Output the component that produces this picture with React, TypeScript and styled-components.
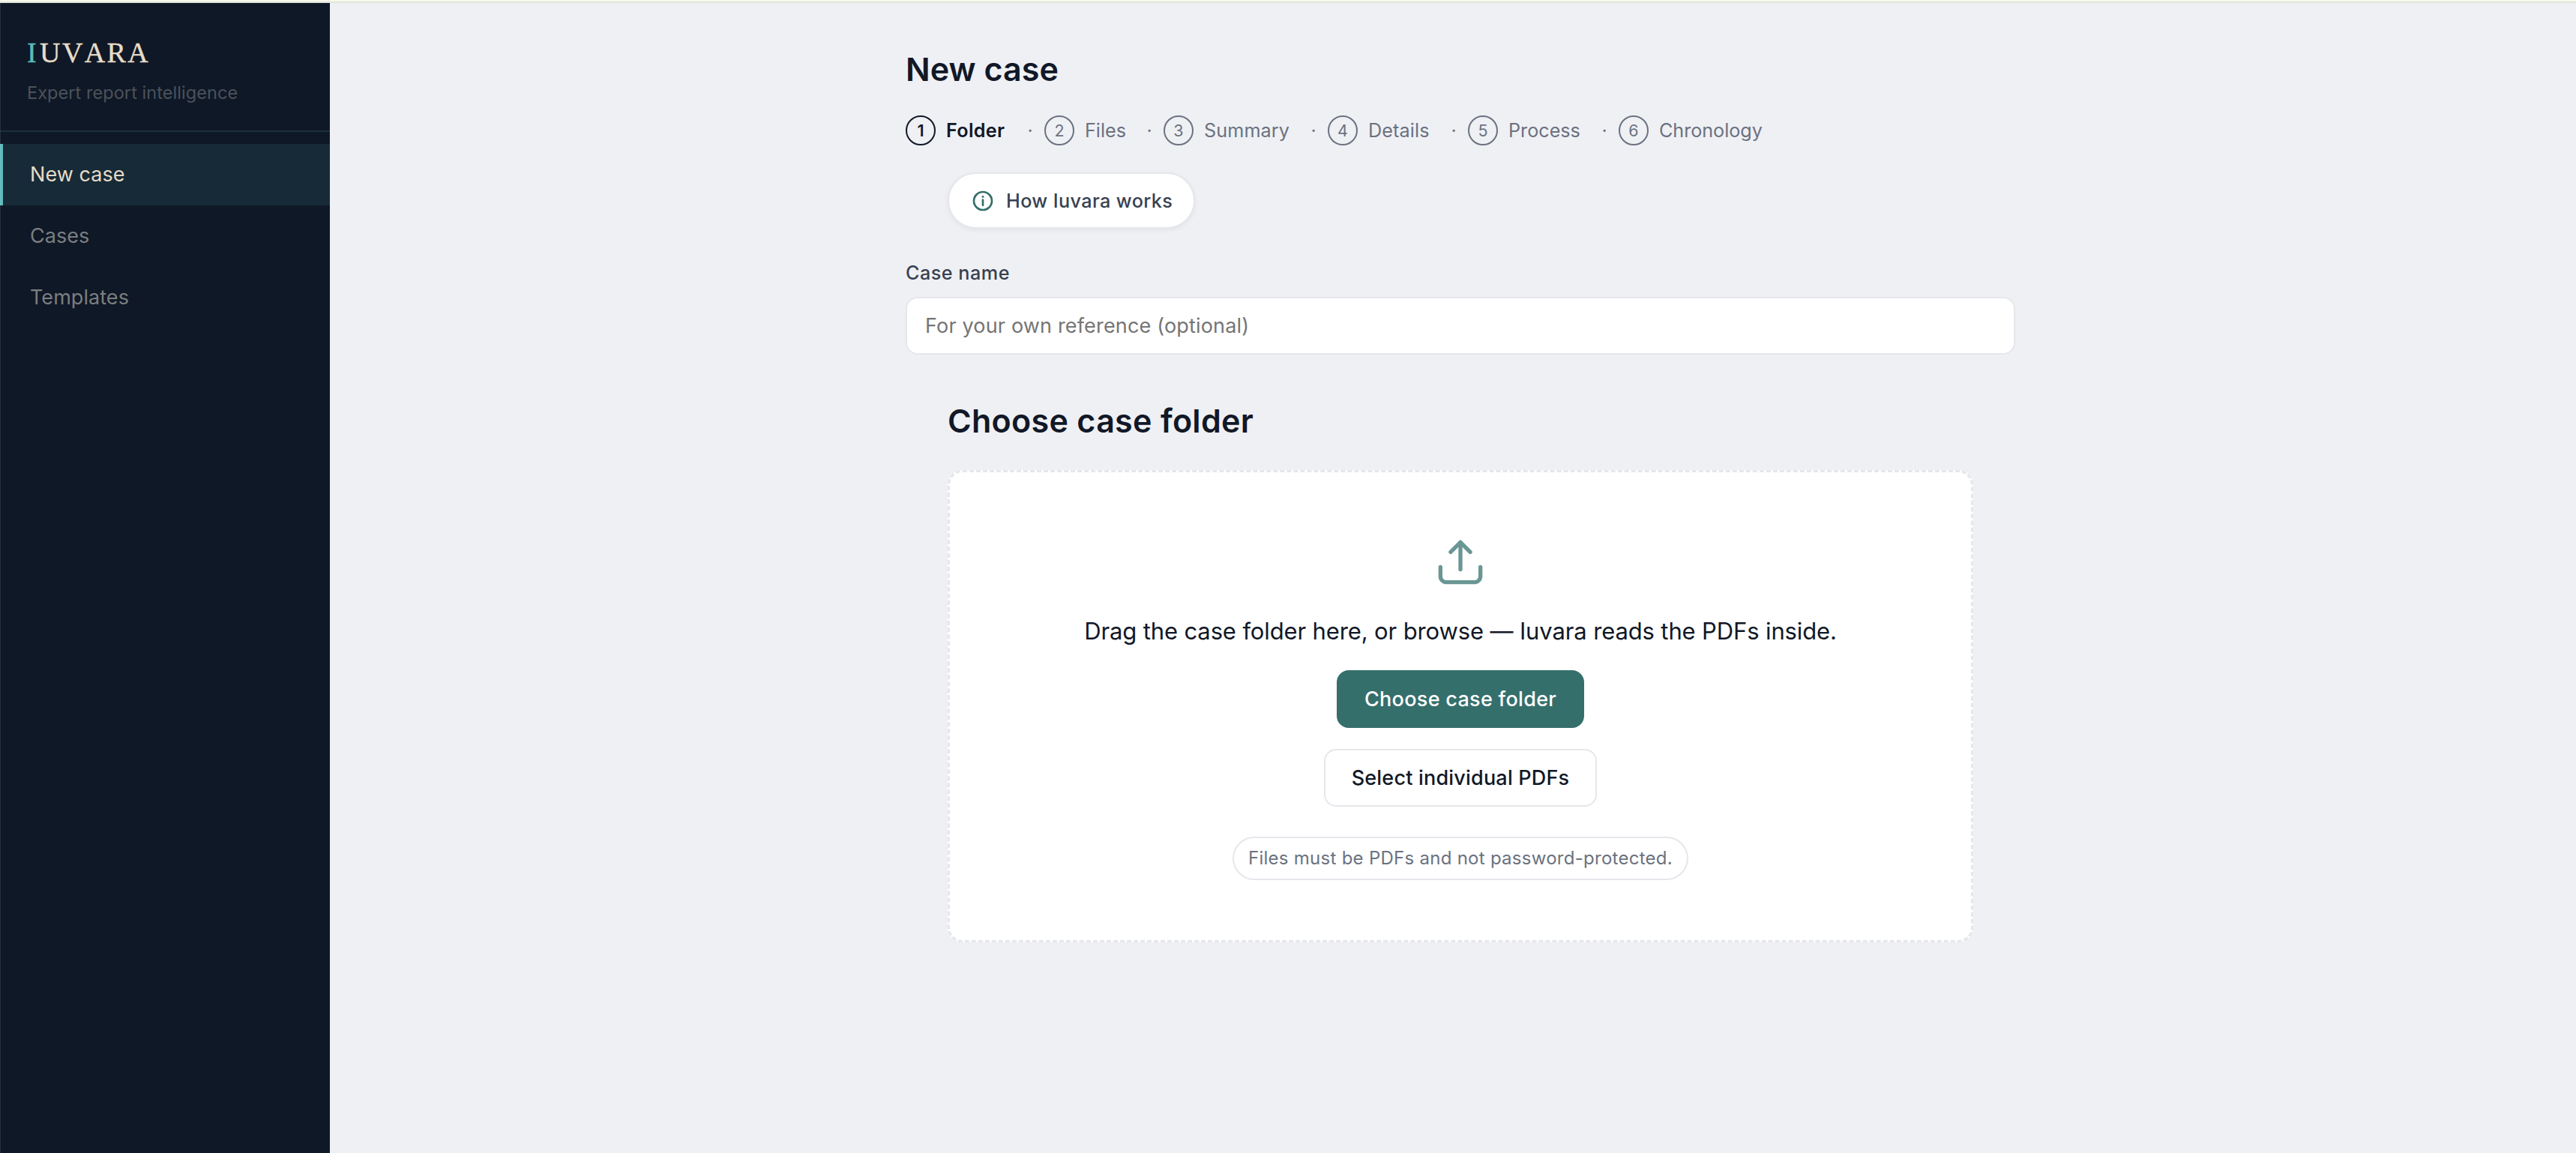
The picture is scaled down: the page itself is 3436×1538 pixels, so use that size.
import React from "react";
import styled, { createGlobalStyle } from "styled-components";

const ink = "#111827";
const slate = "#374151";
const muted = "#6b7280";
const line = "#e5e7eb";
const teal = "#356f6c";

const GlobalStyle = createGlobalStyle`
  *, *::before, *::after { box-sizing: border-box; }
  body {
    margin: 0;
    background: #eff0f4;
    color: ${ink};
    font-family: Inter, "Liberation Sans", sans-serif;
    overflow: hidden;
  }
  h1, h2, p { margin: 0; }
  button, input { font-family: inherit; margin: 0; }
`;

const Page = styled.div`
  display: flex;
  flex-direction: column;
  height: 1538px;
`;

const TopStrip = styled.div`
  flex: none;
  height: 4px;
  background: #f6f9ec;
  border-bottom: 2px solid #e1e5d8;
`;

const Body = styled.div`
  display: flex;
  flex: 1;
  min-height: 0;
`;

const Sidebar = styled.aside`
  position: relative;
  flex: none;
  width: 440px;
  background: #0f1826;

  &::before {
    content: "";
    position: absolute;
    inset: 0 auto 0 0;
    width: 1px;
    background: rgba(255, 255, 255, 0.1);
  }
`;

const Brand = styled.div`
  height: 172px;
  padding: 43px 36px 0;
  border-bottom: 2px solid #1b303c;
`;

const Wordmark = styled.div`
  height: 46px;
  font: 400 38px/46px "Liberation Serif", serif;
  font-kerning: none;
  letter-spacing: 2.4px;
  color: #e5dcc8;
  -webkit-text-stroke: 0.4px currentColor;
`;

const WordmarkInitial = styled.span`
  color: #5cbaba;
  margin-right: 2px;
`;

const Tagline = styled.div`
  margin-top: 14px;
  font-size: 23.5px;
  line-height: 33px;
  letter-spacing: 0.06px;
  color: #4b525b;
`;

const Nav = styled.nav`
  display: flex;
  flex-direction: column;
  padding-top: 16px;
`;

const NavItem = styled.a<{ $active?: boolean }>`
  display: flex;
  align-items: center;
  height: 82px;
  padding: 0 0 1px 36px;
  border-left: 4px solid ${(p) => (p.$active ? "#5cbaba" : "transparent")};
  background: ${(p) => (p.$active ? "#172a37" : "transparent")};
  color: ${(p) => (p.$active ? "#e5dcc8" : "#7b7e81")};
  font-size: 27px;
  letter-spacing: 0.05px;
`;

const Main = styled.main`
  flex: 1;
  padding: 59px 0 0 768px;
`;

const Column = styled.div`
  display: flex;
  flex-direction: column;
  width: 1480px;
`;

const Title = styled.h1`
  font-size: 43px;
  font-weight: 600;
  line-height: 58px;
  letter-spacing: 0.05px;
`;

const Steps = styled.div`
  display: flex;
  height: 40px;
  margin-top: 33px;
`;

const Step = styled.div<{ $width: number; $active?: boolean }>`
  display: flex;
  align-items: center;
  flex: none;
  width: ${(p) => p.$width}px;
  color: ${(p) => (p.$active ? ink : muted)};
  font-weight: ${(p) => (p.$active ? 600 : 400)};
`;

const StepNumber = styled.span`
  display: flex;
  align-items: center;
  justify-content: center;
  flex: none;
  width: 40px;
  height: 40px;
  border: 2px solid currentColor;
  border-radius: 50%;
  font-size: 21.5px;
`;

const StepLabel = styled.span<{ $tracking: number }>`
  margin-left: 14px;
  font-size: 25.2px;
  letter-spacing: ${(p) => p.$tracking}px;
  white-space: nowrap;
`;

const StepDot = styled.span`
  width: 12px;
  margin: 0 13px 0 auto;
  color: ${muted};
  font-size: 25px;
  font-weight: 400;
  text-align: center;
`;

const HowPill = styled.button`
  display: flex;
  align-items: center;
  align-self: flex-start;
  gap: 15px;
  width: 330px;
  height: 75px;
  margin: 36px 0 0 56px;
  padding: 0 0 0 29px;
  border: 2px solid ${line};
  border-radius: 38px;
  background: #fff;
  box-shadow: 0 2px 6px rgba(17, 24, 39, 0.06);
  color: ${slate};
  font-size: 25.2px;
  font-weight: 450;
  letter-spacing: 0.4px;
  white-space: nowrap;
`;

const FieldLabel = styled.label`
  margin-top: 41px;
  font-size: 25.2px;
  font-weight: 550;
  line-height: 36px;
  letter-spacing: 0.5px;
  color: ${slate};
`;

const TextField = styled.input`
  width: 100%;
  height: 77px;
  margin-top: 14px;
  padding: 0 24px;
  border: 2px solid ${line};
  border-radius: 16px;
  background: #fff;
  font-size: 27px;
  letter-spacing: 0.17px;
  outline: none;

  &::placeholder {
    color: #757575;
    opacity: 1;
  }
`;

const SectionTitle = styled.h2`
  margin: 59px 0 0 56px;
  font-size: 43px;
  font-weight: 600;
  line-height: 58px;
  letter-spacing: 0.3px;
`;

const DropZone = styled.section`
  display: flex;
  flex-direction: column;
  align-items: center;
  height: 630px;
  margin: 37px 56px 0;
  padding-top: 88px;
  border: 3px dashed ${line};
  border-radius: 20px;
  background: #fff;
`;

const DropText = styled.p`
  margin-top: 36px;
  font-size: 31px;
  line-height: 48px;
  letter-spacing: -0.13px;
  white-space: nowrap;
`;

const Button = styled.button<{ $primary?: boolean }>`
  display: flex;
  align-items: center;
  justify-content: center;
  width: ${(p) => (p.$primary ? 330 : 364)}px;
  height: 77px;
  margin-top: 28px;
  padding: 0 0 1px;
  border: 2px solid ${(p) => (p.$primary ? teal : line)};
  border-radius: 16px;
  background: ${(p) => (p.$primary ? teal : "#fff")};
  color: ${(p) => (p.$primary ? "#fff" : ink)};
  font-size: 27px;
  font-weight: 450;
  letter-spacing: ${(p) => (p.$primary ? 0.3 : 0.2)}px;
`;

const Note = styled.p`
  display: flex;
  align-items: center;
  justify-content: center;
  width: 608px;
  height: 58px;
  margin-top: 40px;
  padding-bottom: 2px;
  border: 2px solid ${line};
  border-radius: 29px;
  color: ${muted};
  font-size: 24px;
  letter-spacing: 0.27px;
  white-space: nowrap;
`;

const InfoIcon = () => (
  <svg width="32" height="32" viewBox="0 0 24 24" fill="none" stroke={teal} strokeWidth="2" strokeLinecap="round">
    <circle cx="12" cy="12" r="9" />
    <path d="M12 11v5.4" />
    <circle cx="12" cy="7.8" r="1.1" fill={teal} stroke="none" />
  </svg>
);

const UploadIcon = () => (
  <svg
    width="64"
    height="64"
    viewBox="0 0 24 24"
    fill="none"
    stroke="#6a9694"
    strokeWidth="2"
    strokeLinecap="round"
    strokeLinejoin="round"
  >
    <path d="M2 14.4V19a3 3 0 0 0 3 3h14a3 3 0 0 0 3-3v-4.6" />
    <path d="M12 15.6V2" />
    <path d="M7.1 6.9L12 2l4.9 4.9" />
  </svg>
);

const navItems = [{ label: "New case", active: true }, { label: "Cases" }, { label: "Templates" }];

const steps = [
  { label: "Folder", width: 185, tracking: 0.3, active: true },
  { label: "Files", width: 159, tracking: 0 },
  { label: "Summary", width: 219, tracking: 0.1 },
  { label: "Details", width: 187, tracking: 0.1 },
  { label: "Process", width: 201, tracking: 0 },
  { label: "Chronology", width: 201, tracking: -0.05 },
];

export default function App() {
  return (
    <>
      <GlobalStyle />
      <Page>
        <TopStrip />
        <Body>
          <Sidebar>
            <Brand>
              <Wordmark>
                <WordmarkInitial>I</WordmarkInitial>UVARA
              </Wordmark>
              <Tagline>Expert report intelligence</Tagline>
            </Brand>
            <Nav>
              {navItems.map((item) => (
                <NavItem key={item.label} $active={item.active}>
                  {item.label}
                </NavItem>
              ))}
            </Nav>
          </Sidebar>
          <Main>
            <Column>
              <Title>New case</Title>
              <Steps>
                {steps.map((step, i) => (
                  <Step key={step.label} $width={step.width} $active={step.active}>
                    <StepNumber>{i + 1}</StepNumber>
                    <StepLabel $tracking={step.tracking}>{step.label}</StepLabel>
                    {i < steps.length - 1 && <StepDot>·</StepDot>}
                  </Step>
                ))}
              </Steps>
              <HowPill>
                <InfoIcon />
                <span>How Iuvara works</span>
              </HowPill>
              <FieldLabel htmlFor="case-name">Case name</FieldLabel>
              <TextField id="case-name" placeholder="For your own reference (optional)" />
              <SectionTitle>Choose case folder</SectionTitle>
              <DropZone>
                <UploadIcon />
                <DropText>Drag the case folder here, or browse — Iuvara reads the PDFs inside.</DropText>
                <Button $primary>Choose case folder</Button>
                <Button>Select individual PDFs</Button>
                <Note>Files must be PDFs and not password-protected.</Note>
              </DropZone>
            </Column>
          </Main>
        </Body>
      </Page>
    </>
  );
}
